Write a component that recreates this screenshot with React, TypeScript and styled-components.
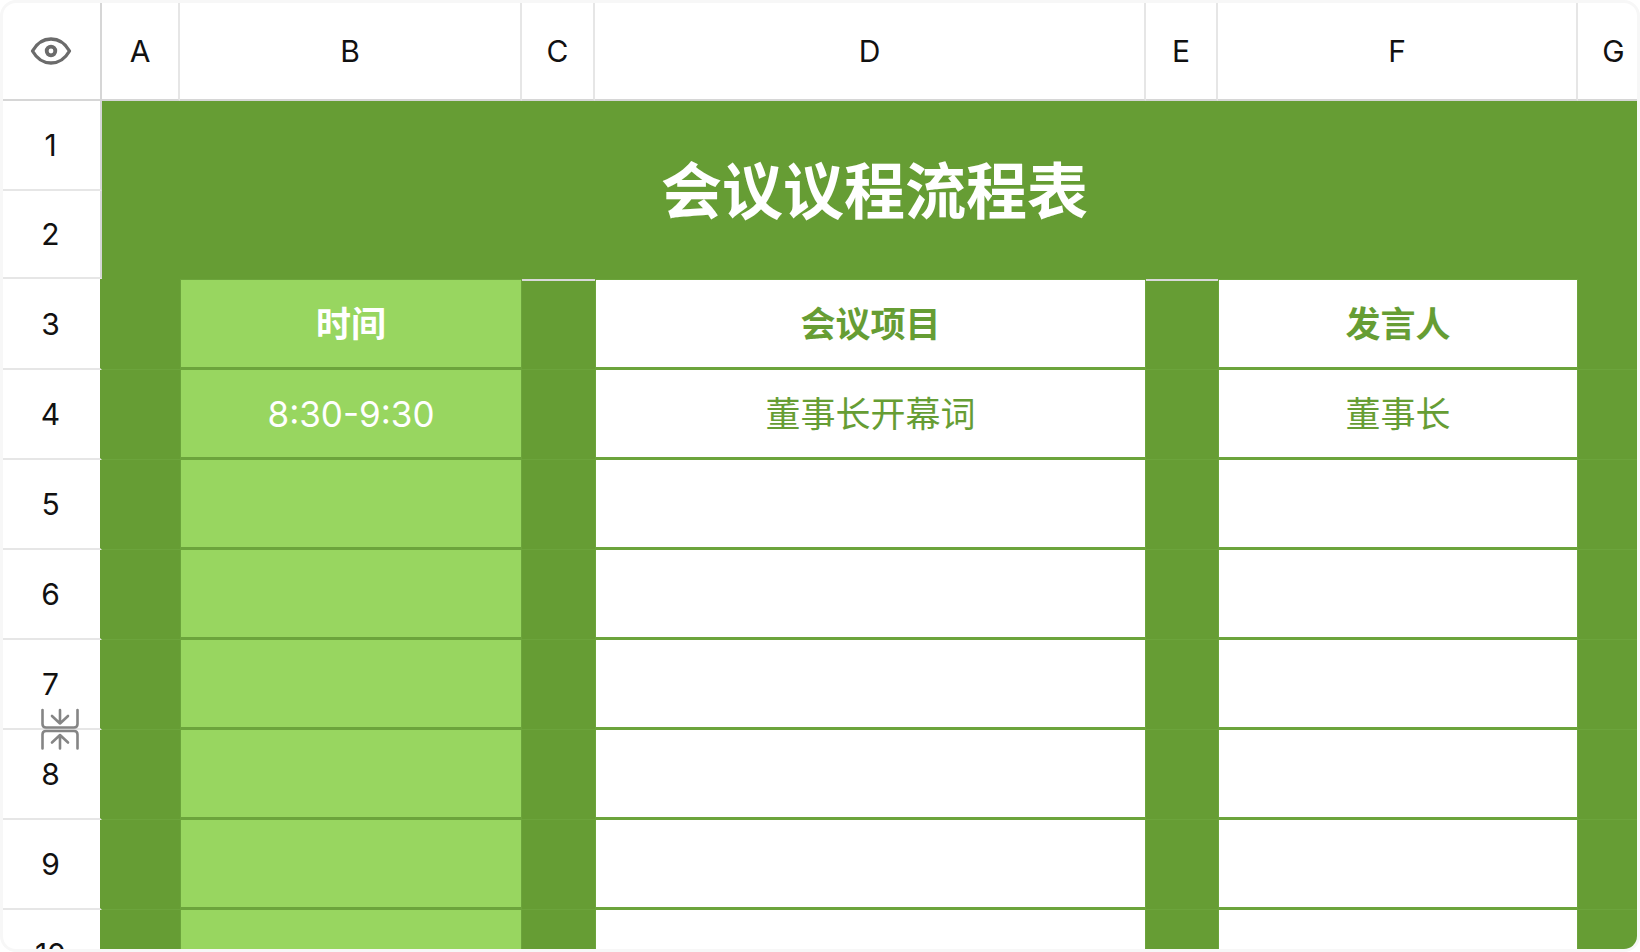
import React from "react";
import styled, { createGlobalStyle } from "styled-components";

const GREEN = "#669d34";
const LINE = "#6ca43c";
const LIGHT = "#98d660";
const GRID = "#e6e6e6";
const FRAME = "#d6d6d6";

const GlobalStyle = createGlobalStyle`
  * { box-sizing: border-box; }
  body {
    margin: 0;
    background: #ffffff;
    font-family: Inter, "Noto Sans CJK SC", sans-serif;
  }
`;

const Card = styled.main`
  height: 100vh;
  overflow: hidden;
  border: 3px solid #f7f7f7;
  border-radius: 16px;
  background: #ffffff;
`;

const Sheet = styled.table`
  width: 100%;
  table-layout: fixed;
  border-collapse: separate;
  border-spacing: 0;
`;

const Column = styled.col<{ $width: number }>`
  width: ${(p) => p.$width}px;
`;

const HeaderRow = styled.tr`
  height: 98px;
`;

const Row = styled.tr<{ $height?: number }>`
  height: ${(p) => p.$height ?? 90}px;
`;

const Label = styled.th`
  padding: 0;
  font-size: 30px;
  line-height: 36px;
  font-weight: 400;
  color: #111111;
  vertical-align: middle;
`;

const Corner = styled(Label)`
  padding-right: 2px;
  border-right: 2px solid ${FRAME};
  border-bottom: 2px solid ${FRAME};
`;

const ColumnLabel = styled(Label)<{ $last?: boolean }>`
  border-right: ${(p) => (p.$last ? 0 : 2)}px solid ${GRID};
  border-bottom: 2px solid ${FRAME};
  ${(p) => p.$last && "padding-left: 12px;"}
`;

const RowLabel = styled(Label)<{ $framed?: boolean }>`
  position: relative;
  padding-right: 2px;
  border-right: 2px solid ${(p) => (p.$framed ? FRAME : GREEN)};
  border-bottom: 2px solid ${GRID};
`;

const TitleCell = styled.td`
  padding: 4px 0 0 10px;
  background: ${GREEN};
  color: #ffffff;
  text-align: center;
  font-size: 61px;
  line-height: 72px;
  font-weight: 700;
`;

const GutterCell = styled.td<{ $notch?: boolean }>`
  padding: 0;
  background: ${GREEN};
  border-bottom: 1px solid ${LINE};
  ${(p) => p.$notch && "border-top: 2px solid #d9d9d9;"}
`;

const Cell = styled.td<{ $light?: boolean; $bold?: boolean }>`
  padding: 0;
  background: ${(p) => (p.$light ? LIGHT : "#ffffff")};
  color: ${(p) => (p.$light ? "#ffffff" : GREEN)};
  border: solid ${LINE};
  border-width: ${(p) => (p.$bold ? 1 : 0)}px 1px 3px;
  text-align: center;
  font-size: 35px;
  line-height: 42px;
  font-weight: ${(p) => (p.$bold ? 700 : 400)};
`;

const EyeButton = styled.button`
  display: block;
  margin: 0 auto;
  padding: 0;
  border: 0;
  background: none;
  color: #6b6b6b;
  line-height: 0;
`;

const ResizeHandle = styled.button`
  position: absolute;
  z-index: 1;
  right: 20px;
  bottom: -22px;
  padding: 0;
  border: 0;
  background: none;
  color: #858585;
  line-height: 0;
`;

const EyeIcon = () => (
  <svg width="42" height="30" viewBox="0 0 42 30" fill="none" stroke="currentColor" strokeWidth="3.300">
    <path d="M2.500 15C7 7 13.500 3 21 3s14 4 18.500 12C35 23 28.500 27 21 27S7 23 2.500 15z" strokeLinejoin="round" />
    <circle cx="21" cy="15" r="4.300" strokeWidth="3.800" />
  </svg>
);

const ResizeIcon = () => (
  <svg width="40" height="42" viewBox="0 0 40 42" fill="none" stroke="currentColor" strokeWidth="2.600" strokeLinecap="round" strokeLinejoin="round">
    <path d="M2.500 2v14q0 3.500 3.500 3.500h28q3.500 0 3.500-3.500V2" />
    <path d="M20 2v13.500M12 8l8 7.500L28 8" />
    <path d="M2.500 40.500V26.500q0-3.500 3.500-3.500h28q3.500 0 3.500 3.500v14" />
    <path d="M20 40.500V27M12 34.500l8-7.500 8 7.500" />
  </svg>
);

const columns = ["A", "B", "C", "D", "E", "F", "G"];
const widths = [99, 78, 342, 73, 551, 72, 360, 59];

const agenda = [
  { time: "时间", item: "会议项目", speaker: "发言人", heading: true },
  { time: "8:30-9:30", item: "董事长开幕词", speaker: "董事长", heading: false },
  ...Array.from({ length: 6 }, () => ({ time: "", item: "", speaker: "", heading: false })),
];

export default function App() {
  return (
    <>
      <GlobalStyle />
      <Card>
        <Sheet>
          <colgroup>
            {widths.map((width, i) => (
              <Column key={i} $width={width} />
            ))}
          </colgroup>
          <thead>
            <HeaderRow>
              <Corner>
                <EyeButton type="button" aria-label="显示">
                  <EyeIcon />
                </EyeButton>
              </Corner>
              {columns.map((name) => (
                <ColumnLabel key={name} scope="col" $last={name === "G"}>
                  {name}
                </ColumnLabel>
              ))}
            </HeaderRow>
          </thead>
          <tbody>
            <Row>
              <RowLabel scope="row" $framed>1</RowLabel>
              <TitleCell colSpan={7} rowSpan={2}>会议议程流程表</TitleCell>
            </Row>
            <Row $height={88}>
              <RowLabel scope="row" $framed>2</RowLabel>
            </Row>
            {agenda.map((entry, i) => (
              <Row key={i} $height={entry.heading ? 91 : 90}>
                <RowLabel scope="row">
                  {i + 3}
                  {i + 3 === 7 && (
                    <ResizeHandle type="button" aria-label="调整行高">
                      <ResizeIcon />
                    </ResizeHandle>
                  )}
                </RowLabel>
                <GutterCell />
                <Cell $light $bold={entry.heading}>{entry.time}</Cell>
                <GutterCell $notch={entry.heading} />
                <Cell $bold={entry.heading}>{entry.item}</Cell>
                <GutterCell $notch={entry.heading} />
                <Cell $bold={entry.heading}>{entry.speaker}</Cell>
                <GutterCell />
              </Row>
            ))}
          </tbody>
        </Sheet>
      </Card>
    </>
  );
}
